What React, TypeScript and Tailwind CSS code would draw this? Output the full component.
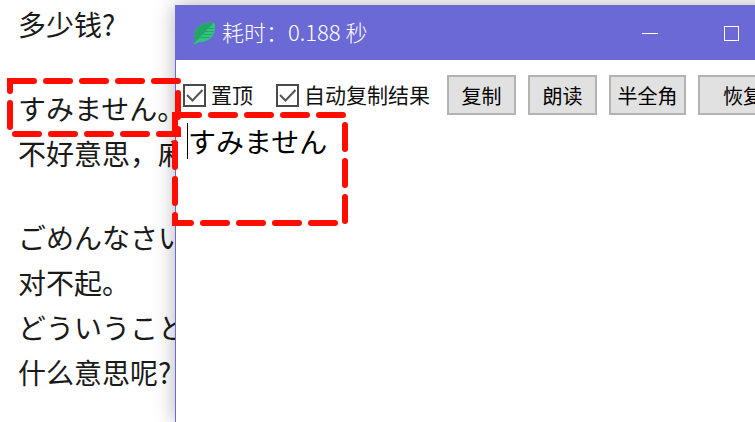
import { useState } from "react";

const PARAGRAPHS = [
  [{ lang: "zh", text: "多少钱?" }],
  [
    { lang: "ja", text: "すみません。" },
    { lang: "zh", text: "不好意思，麻" },
  ],
  [
    { lang: "ja", text: "ごめんなさい" },
    { lang: "zh", text: "对不起。" },
    { lang: "ja", text: "どういうこと" },
    { lang: "zh", text: "什么意思呢?" },
  ],
];

const ACTIONS = [
  { label: "复制", width: "w-[69px]" },
  { label: "朗读", width: "w-[69px]" },
  { label: "半全角", width: "w-[77px]" },
  { label: "恢复", width: "w-[90px]" },
];

function LeafIcon() {
  return (
    <svg viewBox="0 0 24 24" className="h-6 w-6 shrink-0" aria-hidden="true">
      <path d="M3.500 19C0 8 8 1 21 1.500C22.500 2 23 3 23 5C23 15 18 21 7 21L3 23.500L1 22.500Z" fill="#34c480" />
      <path d="M3.500 19C0 8 8 1 21 1.500L21.500 2L5.500 19L2 23L1 22.500Z" fill="#23a566" />
      <path
        d="M16.500 7.500H22M13.500 10.500H21.500M11 13.500H20M8.500 16.500H17.500"
        stroke="#23a566"
        strokeWidth="1"
        fill="none"
      />
    </svg>
  );
}

function CheckOption({ id, label }: { id: string; label: string }) {
  const [checked, setChecked] = useState(true);
  return (
    <div className="flex shrink-0 items-center gap-[5px]">
      <span className="relative h-[23px] w-[23px]">
        <input
          id={id}
          type="checkbox"
          checked={checked}
          onChange={(e) => setChecked(e.target.checked)}
          className="block h-full w-full appearance-none border-2 border-[#4a4a4a] bg-white"
        />
        {checked && (
          <svg viewBox="0 0 23 23" className="pointer-events-none absolute inset-0" aria-hidden="true">
            <path d="M4 11L9.500 16.500L19.500 6" fill="none" stroke="#555" strokeWidth="2" />
          </svg>
        )}
      </span>
      <label htmlFor={id} className="pb-0.5 text-[21px] leading-7 whitespace-nowrap text-[#111]">
        {label}
      </label>
    </div>
  );
}

function TranslatorWindow() {
  const [text, setText] = useState("すみません");
  return (
    <section className="absolute top-[5px] -right-16 bottom-0 left-[175px] flex flex-col border-t border-l border-[#6b69d6] bg-white shadow-[0_0_20px_rgba(0,0,0,0.3)]">
      <header className="flex h-[54px] shrink-0 items-center bg-[#6b69d6] pr-20 pl-4 text-white">
        <LeafIcon />
        <h1 className="flex-1 pb-1 pl-1.5 text-[22px] leading-8 font-light whitespace-nowrap">
          耗时：0.188 秒
        </h1>
        <div className="flex items-center gap-[66px]">
          <button type="button" aria-label="最小化" className="flex h-4 w-4 items-center">
            <span className="h-px w-full bg-white" />
          </button>
          <button type="button" aria-label="最大化" className="h-[15px] w-[15px] border border-white" />
        </div>
      </header>

      <div className="flex items-center overflow-hidden pt-[15px] pb-2 pl-[7px]">
        <div className="flex gap-[23px]">
          <CheckOption id="pin" label="置顶" />
          <CheckOption id="auto-copy" label="自动复制结果" />
        </div>
        <div className="flex gap-3 pl-[17px]">
          {ACTIONS.map((action) => (
            <button
              key={action.label}
              type="button"
              className={`h-10 shrink-0 border-2 border-[#b3b3b3] bg-[#e1e1e1] pt-0.5 text-[20px] whitespace-nowrap text-black ${action.width}`}
            >
              {action.label}
            </button>
          ))}
        </div>
      </div>

      <div className="flex flex-1 pl-[11px]">
        {/* text caret */}
        <span className="h-9 w-px bg-black" />
        <textarea
          lang="ja"
          aria-label="识别结果"
          value={text}
          onChange={(e) => setText(e.target.value)}
          className="flex-1 resize-none bg-transparent font-['Noto_Sans_CJK_JP',sans-serif] text-[28px] leading-9 text-black outline-none"
        />
      </div>
    </section>
  );
}

export default function App() {
  return (
    <main className="relative min-h-screen overflow-hidden bg-white font-['Noto_Sans_CJK_SC',sans-serif]">
      <article className="flex flex-col gap-[39px] pt-0.5 pl-[18px] text-[28px] leading-[45px] text-[#1a1a1a]">
        {PARAGRAPHS.map((lines) => (
          <div key={lines[0].text}>
            {lines.map((line) => (
              <p
                key={line.text}
                lang={line.lang}
                className={line.lang === "ja" ? "font-['Noto_Sans_CJK_JP',sans-serif]" : ""}
              >
                {line.text}
              </p>
            ))}
          </div>
        ))}
      </article>

      <TranslatorWindow />

      {/* dashed callouts around the source word and its result */}
      <svg
        width="360"
        height="240"
        className="pointer-events-none absolute top-0 left-0"
        fill="none"
        stroke="#ff0d00"
        strokeWidth="6"
        strokeLinecap="round"
        strokeDasharray="24 12"
        aria-hidden="true"
      >
        <path d="M10 81H178V134H10Z" />
        <path d="M175 115H345V223H175Z" />
      </svg>
    </main>
  );
}
